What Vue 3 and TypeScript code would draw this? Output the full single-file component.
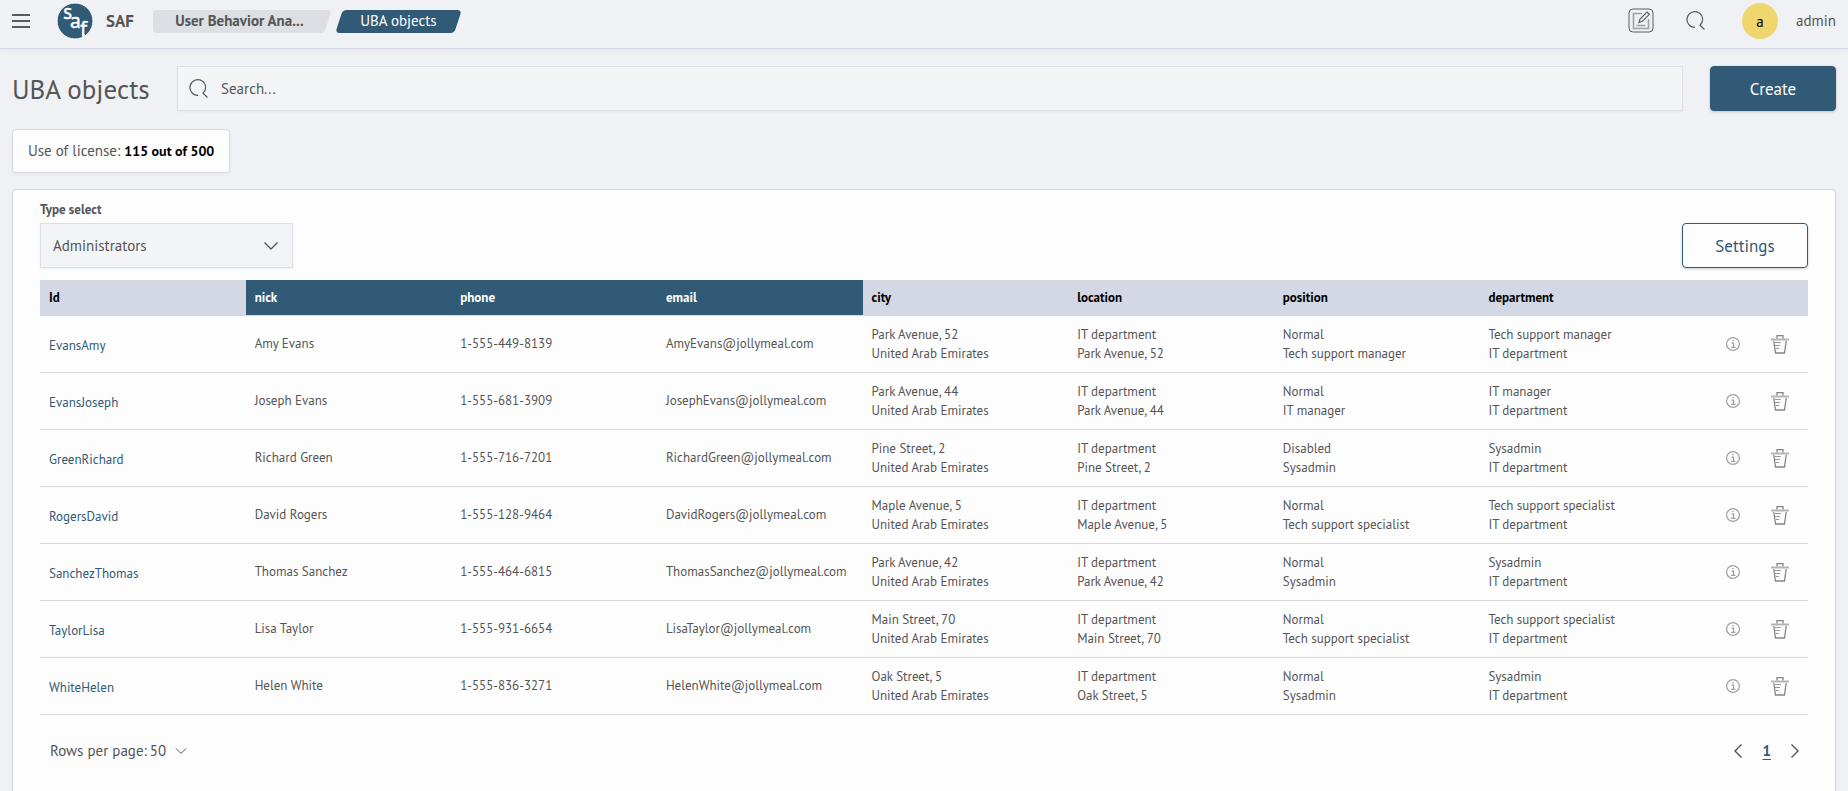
<script setup lang="ts">
import { ref } from 'vue'

interface Column {
  key: string
  marked?: boolean
}

interface Person {
  id: string
  nick: string
  phone: string
  city: string[]
  location: string[]
  position: string[]
  department: string[]
}

const columns: Column[] = [
  { key: 'Id' },
  { key: 'nick', marked: true },
  { key: 'phone', marked: true },
  { key: 'email', marked: true },
  { key: 'city' },
  { key: 'location' },
  { key: 'position' },
  { key: 'department' },
]

function person(
  first: string,
  last: string,
  phone: string,
  street: string,
  status: string,
  job: string,
): Person {
  return {
    id: last + first,
    nick: `${first} ${last}`,
    phone,
    city: [street, 'United Arab Emirates'],
    location: ['IT department', street],
    position: [status, job],
    department: [job, 'IT department'],
  }
}

const people: Person[] = [
  person('Amy', 'Evans', '1-555-449-8139', 'Park Avenue, 52', 'Normal', 'Tech support manager'),
  person('Joseph', 'Evans', '1-555-681-3909', 'Park Avenue, 44', 'Normal', 'IT manager'),
  person('Richard', 'Green', '1-555-716-7201', 'Pine Street, 2', 'Disabled', 'Sysadmin'),
  person('David', 'Rogers', '1-555-128-9464', 'Maple Avenue, 5', 'Normal', 'Tech support specialist'),
  person('Thomas', 'Sanchez', '1-555-464-6815', 'Park Avenue, 42', 'Normal', 'Sysadmin'),
  person('Lisa', 'Taylor', '1-555-931-6654', 'Main Street, 70', 'Normal', 'Tech support specialist'),
  person('Helen', 'White', '1-555-836-3271', 'Oak Street, 5', 'Normal', 'Sysadmin'),
]

const query = ref('')
const type = ref('Administrators')
const pageSize = ref('50')

const email = (p: Person) => `${p.nick.replace(' ', '')}@jollymeal.com`
const details = (p: Person) => [p.city, p.location, p.position, p.department]
</script>

<template>
  <div class="page">
    <header class="topbar">
      <button class="icon-button" aria-label="Menu">
        <svg width="18" height="14" viewBox="0 0 18 14"><path d="M0 1h18M0 7h18M0 13h18" stroke="#5a5a58" stroke-width="2" /></svg>
      </button>
      <a class="brand" href="#">
        <svg class="logo" width="38" height="38" viewBox="0 0 38 38" aria-hidden="true">
          <circle cx="19" cy="19" r="18" fill="#305a76" stroke="#fff" />
          <g class="logo-text">
            <text x="7" y="17">s</text>
            <text x="14" y="26">a</text>
            <text x="24" y="34">f</text>
          </g>
          <path d="M27.500 32v4" stroke="#fff" stroke-width="2" />
        </svg>
        <span>SAF</span>
      </a>
      <nav class="crumbs" aria-label="Breadcrumb">
        <a class="crumb first" href="#"><span>User Behavior Ana...</span></a>
        <a class="crumb current" href="#" aria-current="page"><span>UBA objects</span></a>
      </nav>
      <div class="tools">
        <button class="icon-button" aria-label="Notes">
          <svg width="26" height="26" viewBox="0 0 26 26" fill="none">
            <rect x="1" y="1" width="24" height="23" rx="4" stroke="#5c5c5c" />
            <path d="M14 5.500H5.500v15h15V11" stroke="#a0a0a0" stroke-width="1.600" />
            <path d="M8.500 17.500h9" stroke="#a0a0a0" stroke-width="1.600" />
            <path d="m11 14.500 1-3.500 7-7 2.300 2.300-7 7z" stroke="#5c5c5c" stroke-width="1.200" />
          </svg>
        </button>
        <button class="icon-button" aria-label="Search">
          <svg width="20" height="20" viewBox="0 0 20 20" fill="none"><path d="M9 16.300A7.800 7.800 0 1 1 14 14.300l4.500 4.200" stroke="#5c5c5c" stroke-width="1.200" /></svg>
        </button>
        <span class="avatar">a</span>
        <span class="user">admin</span>
      </div>
    </header>

    <main class="content">
      <div class="heading">
        <h1>UBA objects</h1>
        <label class="search">
          <svg width="20" height="20" viewBox="0 0 20 20" fill="none" aria-hidden="true"><path d="M9 16.300A7.800 7.800 0 1 1 14 14.300l4.500 4.200" stroke="#5c5c5c" stroke-width="1.200" /></svg>
          <input v-model="query" type="search" placeholder="Search..." aria-label="Search" />
        </label>
        <button class="button primary">Create</button>
      </div>

      <p class="license">Use of license: <strong>115 out of 500</strong></p>

      <section class="panel">
        <div class="filters">
          <div class="field">
            <label for="type">Type select</label>
            <div class="select">
              <select id="type" v-model="type">
                <option>Administrators</option>
              </select>
              <svg width="14" height="8" viewBox="0 0 14 8" fill="none" aria-hidden="true"><path d="m.5.500 6.500 6.500L13.500.500" stroke="#555" stroke-width="1.300" /></svg>
            </div>
          </div>
          <button class="button outline">Settings</button>
        </div>

        <table>
          <colgroup>
            <col v-for="c in columns" :key="c.key" />
            <col class="actions-col" />
          </colgroup>
          <thead>
            <tr>
              <th v-for="c in columns" :key="c.key" scope="col" :class="{ marked: c.marked }">{{ c.key }}</th>
              <th></th>
            </tr>
          </thead>
          <tbody>
            <tr v-for="p in people" :key="p.id">
              <td class="id"><a href="#">{{ p.id }}</a></td>
              <td>{{ p.nick }}</td>
              <td>{{ p.phone }}</td>
              <td>{{ email(p) }}</td>
              <td v-for="(lines, i) in details(p)" :key="i">
                <div v-for="line in lines" :key="line">{{ line }}</div>
              </td>
              <td class="actions-cell">
                <div class="actions">
                  <button class="icon-button" :aria-label="`About ${p.nick}`">
                    <svg width="14" height="14" viewBox="0 0 14 14" fill="none" stroke="#a0a0a0"><circle cx="7" cy="7" r="6.400" stroke-width="1.200" /><path d="M5.500 6.200h2v4M5 10.300h4.500M6.300 3.700h1.500" stroke-width="1.300" /></svg>
                  </button>
                  <button class="icon-button" :aria-label="`Delete ${p.nick}`">
                    <svg width="18" height="19" viewBox="0 0 18 19" fill="none">
                      <path d="M0 4.500h18" stroke="#b4b4b4" stroke-width="2" />
                      <path d="M6 3.500v-3h6v3M2.800 6l1.700 12h9L15.200 6" stroke="#858585" stroke-width="1.300" />
                      <path d="M4 7.500h6M4 10.500h5M5 13.500h3" stroke="#999" stroke-width="1.200" />
                    </svg>
                  </button>
                </div>
              </td>
            </tr>
          </tbody>
        </table>

        <footer class="pager">
          <label class="rows">
            Rows per page:
            <select v-model="pageSize">
              <option>50</option>
            </select>
            <svg width="12" height="7" viewBox="0 0 12 7" fill="none" aria-hidden="true"><path d="m1 .500 5 5 5-5" stroke="#555" /></svg>
          </label>
          <nav class="pages" aria-label="Pages">
            <button class="icon-button" aria-label="Previous page">
              <svg width="8" height="14" viewBox="0 0 8 14" fill="none"><path d="M7.500.500 1 7l6.500 6.500" stroke="#555" stroke-width="1.400" /></svg>
            </button>
            <a href="#" aria-current="page">1</a>
            <button class="icon-button" aria-label="Next page">
              <svg width="8" height="14" viewBox="0 0 8 14" fill="none"><path d="M.500.500 7 7 .500 13.500" stroke="#555" stroke-width="1.400" /></svg>
            </button>
          </nav>
        </footer>
      </section>
    </main>
  </div>
</template>

<style>
body {
  background: #f0f1f4;
}
</style>

<style scoped>
.page {
  display: flex;
  flex-direction: column;
  min-height: 100vh;
  color: #555;
  font: 15px/20px "PT Sans", Lato, "Open Sans", sans-serif;
}
.page * {
  box-sizing: border-box;
}
a {
  color: inherit;
  text-decoration: none;
}
button,
input,
select {
  font: inherit;
  color: inherit;
}
svg {
  display: block;
  flex: none;
}
.icon-button {
  padding: 0;
  border: 0;
  background: none;
}
.topbar {
  display: flex;
  align-items: center;
  height: 49px;
  padding: 0 12px 6px;
  border-bottom: 1px solid #d3d8e4;
  box-shadow: 0 1px 3px #d3d8e480;
}
.brand {
  display: flex;
  align-items: center;
  gap: 12px;
  margin-left: 26px;
  font-size: 17px;
  font-weight: 700;
}
.logo {
  overflow: visible;
}
.logo-text {
  fill: #fff;
  stroke: #fff;
  stroke-width: 0.4;
  font: 400 22px "PT Sans", Lato, sans-serif;
}
.crumbs {
  display: flex;
  gap: 3px;
  margin-left: 19px;
}
.crumb {
  position: relative;
  height: 23px;
  line-height: 22px;
  text-align: center;
  white-space: nowrap;
}
.crumb span {
  position: relative;
  z-index: 1;
}
.crumb::before,
.crumb::after {
  content: "";
  position: absolute;
  inset: 0 4px;
  border-radius: 4px;
  background: #dcdfe4;
  transform: skewX(-18deg);
}
.crumb.first {
  width: 179px;
  padding-right: 6px;
  font-weight: 700;
}
.first::before {
  inset: 0 50% 0 0;
  transform: none;
}
.first::after {
  left: 30%;
}
.current {
  width: 127px;
  color: #fff;
}
.current::before {
  background: #305a76;
}
.current::after {
  content: none;
}
.tools {
  display: flex;
  align-items: center;
  margin-left: auto;
}
.tools .icon-button {
  margin-right: 32px;
}
.avatar {
  width: 36px;
  height: 36px;
  margin: 0 18px 0 4px;
  border-radius: 50%;
  background: #f0d76d;
  color: #000;
  line-height: 38px;
  text-align: center;
}
.content {
  display: flex;
  flex: 1;
  flex-direction: column;
  padding: 17px 12px 0;
}
.heading {
  display: flex;
  align-items: center;
}
h1 {
  width: 165px;
  margin: 0;
  font-size: 27px;
  font-weight: 400;
  line-height: 36px;
  white-space: nowrap;
}
.search {
  display: flex;
  flex: 1;
  align-items: center;
  gap: 12px;
  height: 45px;
  padding: 0 11px;
  border: 1px solid #dcdfe5;
  background: #f3f4f6;
  box-shadow: 0 1px 2px #0000000a;
}
.search input {
  flex: 1;
  padding: 0;
  border: 0;
  outline: 0;
  background: none;
}
.search input::placeholder {
  color: #555;
  opacity: 1;
}
.button {
  width: 126px;
  height: 45px;
  border: 1px solid #305a76;
  border-radius: 4px;
  font-size: 17px;
  box-shadow: 0 1px 3px #0003;
}
.primary {
  margin-left: 27px;
  background: #305a76;
  color: #fff;
}
.outline {
  background: #fdfdfe;
  color: #305a76;
}
.license {
  align-self: flex-start;
  margin: 18px 0 16px;
  padding: 11px 15px;
  border: 1px solid #d9dce3;
  border-radius: 4px;
  background: #fdfdfe;
  box-shadow: 0 1px 3px #0000000f;
}
.license strong {
  color: #000;
  font-size: 14px;
}
.panel {
  flex: 1;
  padding: 10px 27px 0;
  border: 1px solid #d5d8de;
  border-bottom: 0;
  border-radius: 4px 4px 0 0;
  background: #fdfdfe;
}
.filters {
  display: flex;
  align-items: flex-end;
  justify-content: space-between;
  margin-bottom: 12px;
}
.field label {
  display: block;
  margin-bottom: 3px;
  font-size: 13px;
  font-weight: 700;
}
.select {
  display: grid;
  align-items: center;
  width: 253px;
  height: 45px;
  border: 1px solid #dcdfe4;
  background: #f3f4f6;
  box-shadow: 0 1px 2px #0000000f;
}
.select > * {
  grid-area: 1 / 1;
}
.select select {
  height: 100%;
  padding: 0 12px;
}
.select svg {
  justify-self: end;
  margin-right: 14px;
  pointer-events: none;
}
select {
  border: 0;
  outline: 0;
  background: none;
  appearance: none;
}
table {
  width: 100%;
  border-collapse: separate;
  border-spacing: 0;
  table-layout: fixed;
  font-size: 13px;
  line-height: 19px;
}
.actions-col {
  width: 123px;
}
th {
  height: 36px;
  padding: 0 9px;
  border-bottom: 1px solid #d3d8e4;
  background: #d3d8e4;
  color: #000;
  text-align: left;
}
.marked {
  background: #305a76;
  color: #fff;
}
td {
  height: 57px;
  padding: 0 9px 1px;
  border-bottom: 1px solid #d5d8dd;
}
.id {
  padding-top: 3px;
  color: #305a76;
}
.actions-cell {
  padding-bottom: 0;
}
.actions {
  display: flex;
  align-items: center;
  justify-content: flex-end;
  gap: 31px;
  padding-right: 10px;
}
.pager {
  display: flex;
  align-items: center;
  justify-content: space-between;
  padding: 26px 9px 26px 10px;
}
.rows {
  display: flex;
  align-items: center;
}
.rows select {
  margin: 0 8px 0 3px;
  padding: 0;
}
.pages {
  display: flex;
  align-items: center;
  gap: 20px;
}
.pages a {
  color: #305a76;
  font-weight: 700;
  text-decoration: underline;
  text-underline-offset: 3px;
}
</style>
